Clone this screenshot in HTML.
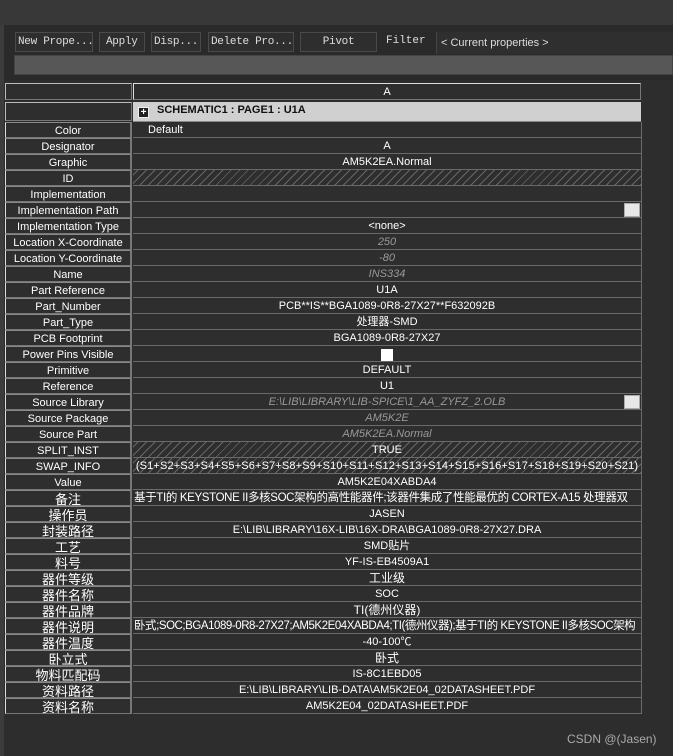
<!DOCTYPE html><html><head><meta charset="utf-8"><style>
*{margin:0;padding:0;box-sizing:border-box}
body{width:673px;height:756px;background:#2d2d2d;position:relative;overflow:hidden;font-family:"Liberation Sans","Noto Sans CJK SC",sans-serif;color:#fff}
.a{position:absolute}
.btn{position:absolute;top:32px;height:20px;border:1px solid #4a4a4a;background:#2e2e2e;color:#ddd;font-family:"Liberation Mono","WenQuanYi Zen Hei",monospace;font-size:11px;line-height:19px;padding-left:2px;white-space:nowrap;letter-spacing:-0.3px}
.row{position:absolute;left:5px;width:637px;height:16px}
.l{position:absolute;left:0;top:0;width:127px;height:16px;border-left:1px solid #ddd;border-top:1px solid #888;border-right:2px solid #777;border-bottom:1px solid #777;background:#2e2e2e;text-align:center;font-size:11px;line-height:16px;color:#fff}
.r{position:absolute;left:128px;top:0;width:509px;height:16px;border-bottom:1px solid #6a6a6a;border-right:1px solid #6a6a6a;background:#2e2e2e;text-align:center;font-size:11px;line-height:17px;color:#fff;white-space:nowrap;overflow:hidden}
.cn{font-size:13px;line-height:17px}
.g{color:#999;font-style:italic}
.h{background:repeating-linear-gradient(135deg,#2e2e2e 0 3px,#666 3px 4px,#2e2e2e 4px 6px)}
.dot{position:absolute;right:1px;top:1px;width:16px;height:14px;background:#e8e8e8;border:1px solid #aaa}
</style></head><body>
<div class="a" style="left:0;top:0;width:673px;height:25px;background:#383838"></div>
<div class="a" style="left:0;top:25px;width:673px;height:55px;background:#2a2a2a"></div>
<div class="a" style="left:0;top:25px;width:4px;height:731px;background:#3c3c3c"></div>
<div class="btn" style="left:15px;width:78px">New Prope...</div>
<div class="btn" style="left:99px;width:46px;padding-left:6px">Apply</div>
<div class="btn" style="left:151px;width:50px">Disp...</div>
<div class="btn" style="left:208px;width:86px">Delete Pro...</div>
<div class="btn" style="left:300px;width:77px;text-align:center;padding:0">Pivot</div>
<div class="a" style="left:386px;top:35px;font-family:'Liberation Mono',monospace;font-size:11px;color:#ddd">Filter</div>
<div class="a" style="left:436px;top:32px;width:237px;height:22px;background:#2f2f2f;border-left:1px solid #444;font-size:11px;line-height:23px;color:#ddd;padding-left:4px">&lt; Current properties &gt;</div>
<div class="a" style="left:14px;top:55px;width:659px;height:20px;background:#575757;border:1px solid #444"></div>

<div class="a" style="left:5px;top:83px;width:127px;height:17px;border:1px solid #bbb;border-right-color:#777;border-bottom-color:#777;background:#2e2e2e"></div>
<div class="a" style="left:133px;top:83px;width:508px;height:17px;border:1px solid #ddd;border-right-color:#777;border-bottom-color:#777;background:#2e2e2e;text-align:center;font-size:11px;line-height:16px">A</div>
<div class="a" style="left:5px;top:102px;width:127px;height:19px;border:1px solid #bbb;border-right-color:#777;border-bottom-color:#777;background:#2e2e2e"></div>
<div class="a" style="left:133px;top:102px;width:508px;height:20px;background:#d0d0d0;border-bottom:1px solid #888"></div>
<div class="a" style="left:138px;top:107px;width:11px;height:11px;background:#222;border:1px solid #eee;color:#fff;font-size:10px;line-height:9px;text-align:center;font-weight:bold">+</div>
<div class="a" style="left:157px;top:104px;font-size:11px;font-weight:bold;color:#111">SCHEMATIC1 : PAGE1 : U1A</div>

<div class="row" style="top:122px"><div class="l">Color</div><div class="r" style="text-align:left;padding-left:15px">Default</div></div>
<div class="row" style="top:138px"><div class="l">Designator</div><div class="r">A</div></div>
<div class="row" style="top:154px"><div class="l">Graphic</div><div class="r">AM5K2EA.Normal</div></div>
<div class="row" style="top:170px"><div class="l">ID</div><div class="r h"></div></div>
<div class="row" style="top:186px"><div class="l">Implementation</div><div class="r"></div></div>
<div class="row" style="top:202px"><div class="l">Implementation Path</div><div class="r"><div class="dot"></div></div></div>
<div class="row" style="top:218px"><div class="l">Implementation Type</div><div class="r">&lt;none&gt;</div></div>
<div class="row" style="top:234px"><div class="l">Location X-Coordinate</div><div class="r g">250</div></div>
<div class="row" style="top:250px"><div class="l">Location Y-Coordinate</div><div class="r g">-80</div></div>
<div class="row" style="top:266px"><div class="l">Name</div><div class="r g">INS334</div></div>
<div class="row" style="top:282px"><div class="l">Part Reference</div><div class="r">U1A</div></div>
<div class="row" style="top:298px"><div class="l">Part_Number</div><div class="r">PCB**IS**BGA1089-0R8-27X27**F632092B</div></div>
<div class="row" style="top:314px"><div class="l">Part_Type</div><div class="r">处理器-SMD</div></div>
<div class="row" style="top:330px"><div class="l">PCB Footprint</div><div class="r">BGA1089-0R8-27X27</div></div>
<div class="row" style="top:346px"><div class="l">Power Pins Visible</div><div class="r"><div class="a" style="left:248px;top:3px;width:12px;height:12px;background:#fff"></div></div></div>
<div class="row" style="top:362px"><div class="l">Primitive</div><div class="r">DEFAULT</div></div>
<div class="row" style="top:378px"><div class="l">Reference</div><div class="r">U1</div></div>
<div class="row" style="top:394px"><div class="l">Source Library</div><div class="r g">E:\LIB\LIBRARY\LIB-SPICE\1_AA_ZYFZ_2.OLB<div class="dot"></div></div></div>
<div class="row" style="top:410px"><div class="l">Source Package</div><div class="r g">AM5K2E</div></div>
<div class="row" style="top:426px"><div class="l">Source Part</div><div class="r g">AM5K2EA.Normal</div></div>
<div class="row" style="top:442px"><div class="l">SPLIT_INST</div><div class="r h">TRUE</div></div>
<div class="row" style="top:458px"><div class="l">SWAP_INFO</div><div class="r h" style="letter-spacing:0.15px">(S1+S2+S3+S4+S5+S6+S7+S8+S9+S10+S11+S12+S13+S14+S15+S16+S17+S18+S19+S20+S21)</div></div>
<div class="row" style="top:474px"><div class="l">Value</div><div class="r">AM5K2E04XABDA4</div></div>
<div class="row" style="top:490px"><div class="l cn">备注</div><div class="r" style="text-align:left;padding-left:1px;font-size:11.5px;letter-spacing:-0.35px">基于TI的 KEYSTONE II多核SOC架构的高性能器件;该器件集成了性能最优的 CORTEX-A15 处理器双</div></div>
<div class="row" style="top:506px"><div class="l cn">操作员</div><div class="r">JASEN</div></div>
<div class="row" style="top:522px"><div class="l cn">封装路径</div><div class="r">E:\LIB\LIBRARY\16X-LIB\16X-DRA\BGA1089-0R8-27X27.DRA</div></div>
<div class="row" style="top:538px"><div class="l cn">工艺</div><div class="r">SMD贴片</div></div>
<div class="row" style="top:554px"><div class="l cn">料号</div><div class="r">YF-IS-EB4509A1</div></div>
<div class="row" style="top:570px"><div class="l cn">器件等级</div><div class="r cn" style="font-size:12px">工业级</div></div>
<div class="row" style="top:586px"><div class="l cn">器件名称</div><div class="r">SOC</div></div>
<div class="row" style="top:602px"><div class="l cn">器件品牌</div><div class="r cn" style="font-size:12px">TI(德州仪器)</div></div>
<div class="row" style="top:618px"><div class="l cn">器件说明</div><div class="r" style="text-align:left;padding-left:1px;font-size:11.5px;letter-spacing:-0.45px">卧式;SOC;BGA1089-0R8-27X27;AM5K2E04XABDA4;TI(德州仪器);基于TI的 KEYSTONE II多核SOC架构</div></div>
<div class="row" style="top:634px"><div class="l cn">器件温度</div><div class="r">-40-100℃</div></div>
<div class="row" style="top:650px"><div class="l cn">卧立式</div><div class="r cn" style="font-size:12px">卧式</div></div>
<div class="row" style="top:666px"><div class="l cn">物料匹配码</div><div class="r">IS-8C1EBD05</div></div>
<div class="row" style="top:682px"><div class="l cn">资料路径</div><div class="r">E:\LIB\LIBRARY\LIB-DATA\AM5K2E04_02DATASHEET.PDF</div></div>
<div class="row" style="top:698px"><div class="l cn">资料名称</div><div class="r">AM5K2E04_02DATASHEET.PDF</div></div>
<div class="a" style="left:567px;top:732px;font-size:12px;color:#aaa">CSDN @(Jasen)</div>
</body></html>
